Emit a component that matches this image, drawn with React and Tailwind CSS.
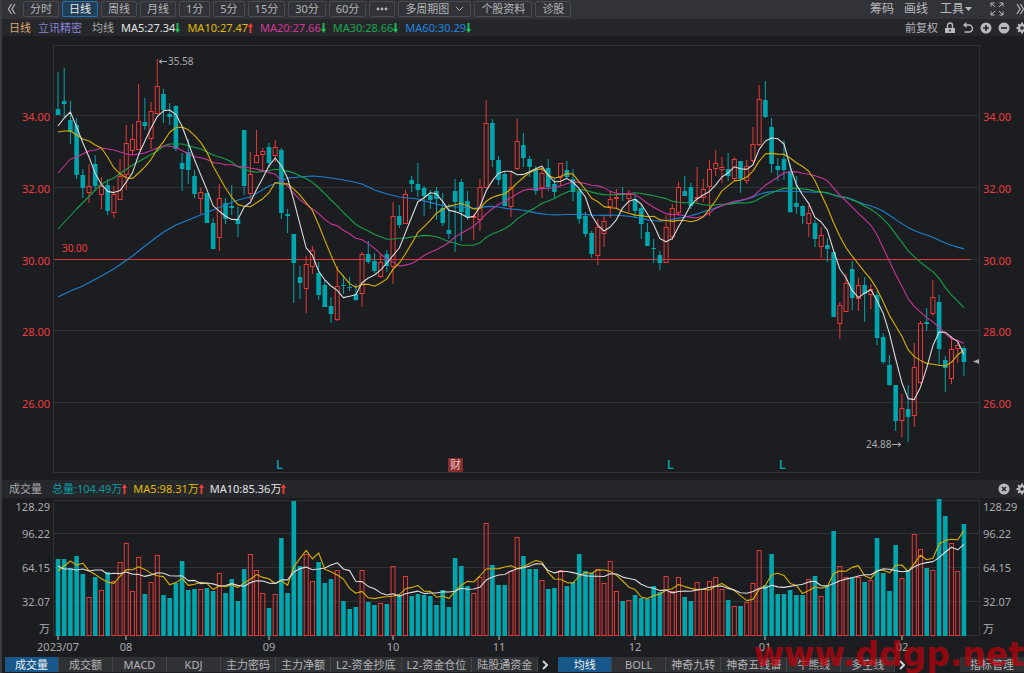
const UP = "#e63a38";
const DOWN = "#00a6ad";
const STEP = 6.205;
const FIRST_X = 58;

// [rising, high, body top, body bottom, low, volume top], in chart units
const candles = [
  [0, 72, 109, 115, 115, 559], [0, 68, 101, 104, 117, 559], [0, 101, 120, 132, 144, 568],
  [0, 118, 125, 175, 179, 556], [0, 169, 175, 188, 198, 574], [1, 164, 186, 193, 203, 597],
  [0, 155, 164, 186, 190, 577], [1, 177, 186, 195, 209, 590], [0, 179, 185, 211, 215, 572],
  [1, 186, 194, 213, 218, 581], [1, 159, 176, 200, 200, 562], [1, 125, 143, 175, 190, 543],
  [1, 124, 139, 151, 155, 591], [1, 84, 121, 150, 150, 557], [0, 98, 122, 126, 130, 594],
  [1, 102, 111, 139, 149, 582], [1, 59, 86, 114, 115, 555], [0, 89, 94, 110, 123, 595],
  [0, 103, 114, 117, 125, 598], [0, 105, 106, 149, 151, 583], [0, 153, 163, 169, 191, 561],
  [0, 139, 152, 170, 184, 590], [0, 170, 176, 194, 198, 589], [1, 188, 192, 199, 214, 589],
  [0, 193, 193, 223, 223, 588], [0, 218, 223, 249, 249, 591], [1, 184, 198, 238, 251, 573],
  [0, 198, 203, 219, 224, 593], [0, 185, 206, 208, 215, 579], [0, 207, 219, 224, 237, 601],
  [0, 130, 130, 186, 195, 569], [1, 152, 174, 194, 200, 554], [1, 130, 155, 163, 163, 570],
  [1, 148, 151, 155, 170, 593], [0, 143, 147, 163, 168, 608], [1, 140, 147, 156, 162, 594],
  [0, 148, 150, 213, 219, 538], [0, 209, 214, 216, 233, 593], [0, 234, 234, 263, 303, 501],
  [0, 266, 277, 283, 299, 566], [1, 256, 264, 289, 313, 554], [1, 246, 250, 267, 274, 581],
  [0, 262, 273, 295, 300, 562], [0, 280, 285, 307, 307, 583], [0, 297, 306, 314, 323, 579],
  [1, 266, 286, 320, 321, 570], [0, 275, 285, 286, 294, 601], [0, 277, 287, 288, 291, 609],
  [0, 284, 294, 300, 301, 607], [1, 252, 254, 294, 307, 570], [0, 241, 254, 262, 264, 602],
  [0, 253, 261, 271, 273, 605], [1, 254, 262, 277, 278, 603], [0, 250, 254, 266, 272, 604],
  [1, 202, 216, 267, 284, 566], [0, 205, 216, 225, 228, 595], [1, 190, 194, 224, 224, 576],
  [0, 176, 180, 184, 192, 596], [0, 163, 184, 190, 197, 594], [0, 186, 188, 196, 216, 595],
  [0, 190, 195, 200, 209, 596], [0, 187, 191, 199, 220, 605], [0, 193, 208, 223, 226, 590],
  [0, 204, 230, 234, 239, 607], [0, 179, 191, 202, 252, 558], [0, 179, 182, 212, 241, 566],
  [0, 191, 201, 217, 220, 586], [1, 214, 216, 218, 240, 593], [1, 179, 187, 220, 231, 577],
  [1, 100, 123, 188, 188, 523], [0, 119, 123, 160, 167, 565], [0, 156, 160, 180, 185, 585],
  [0, 172, 174, 206, 206, 585], [1, 172, 187, 207, 217, 571], [1, 119, 141, 169, 170, 537],
  [0, 133, 145, 158, 167, 556], [0, 156, 159, 167, 177, 569], [0, 166, 169, 191, 195, 569],
  [1, 167, 173, 188, 198, 580], [0, 159, 168, 187, 191, 589], [0, 179, 184, 192, 199, 588],
  [1, 163, 163, 178, 186, 570], [0, 161, 170, 177, 179, 586], [0, 169, 179, 192, 201, 582],
  [0, 189, 191, 219, 224, 554], [0, 212, 216, 234, 237, 571], [0, 231, 233, 254, 258, 573],
  [1, 219, 227, 256, 265, 569], [1, 215, 221, 234, 247, 583], [1, 191, 199, 207, 218, 561],
  [1, 189, 197, 199, 209, 591], [0, 187, 193, 195, 201, 601], [1, 190, 194, 199, 212, 600],
  [0, 195, 199, 211, 218, 595], [0, 205, 208, 224, 239, 598], [0, 223, 232, 246, 246, 599],
  [0, 239, 248, 249, 263, 586], [0, 251, 255, 263, 270, 592], [1, 215, 227, 263, 263, 576],
  [1, 204, 208, 237, 240, 591], [1, 182, 187, 213, 216, 577], [0, 176, 191, 196, 196, 597],
  [0, 183, 187, 206, 209, 601], [1, 167, 197, 199, 203, 582], [1, 179, 189, 198, 202, 589],
  [1, 160, 169, 187, 216, 581], [1, 150, 163, 169, 176, 577], [1, 157, 167, 170, 183, 589],
  [0, 153, 169, 176, 181, 600], [1, 157, 159, 179, 181, 606], [0, 161, 161, 179, 193, 606],
  [1, 160, 166, 181, 184, 602], [1, 127, 144, 161, 163, 583], [1, 85, 99, 145, 146, 550],
  [0, 81, 100, 117, 118, 585], [0, 118, 127, 164, 173, 554], [0, 158, 166, 170, 181, 594],
  [0, 140, 159, 170, 180, 594], [0, 164, 171, 212, 213, 590], [0, 176, 203, 207, 214, 595],
  [0, 205, 206, 216, 224, 595], [1, 205, 213, 224, 237, 579], [0, 220, 223, 239, 247, 576],
  [1, 227, 235, 247, 258, 596], [0, 238, 245, 249, 262, 586], [0, 252, 252, 317, 317, 531],
  [1, 302, 305, 324, 339, 566], [1, 274, 283, 312, 312, 577], [0, 261, 269, 298, 310, 577],
  [1, 278, 285, 299, 311, 577], [0, 277, 285, 294, 322, 582], [1, 284, 289, 295, 309, 580],
  [0, 291, 295, 338, 345, 538], [0, 333, 337, 362, 364, 573], [0, 355, 365, 385, 386, 591],
  [0, 385, 385, 421, 431, 545], [1, 394, 408, 421, 437, 578], [0, 385, 409, 417, 442, 570],
  [1, 343, 367, 416, 427, 534], [1, 321, 323, 383, 384, 549], [0, 308, 322, 324, 331, 568],
  [1, 280, 297, 314, 316, 570], [0, 295, 302, 349, 366, 499], [0, 356, 360, 368, 392, 516],
  [1, 336, 349, 379, 384, 543], [1, 343, 345, 349, 363, 571], [0, 346, 348, 362, 376, 524],
];

const closes = candles.map(([up, , top, bottom]) => (up ? top : bottom));
const volumes = candles.map((c) => c[5]);

const xAt = (i) => FIRST_X + i * STEP;

// head: [index, y] pairs for the days before the window is full
function averageLine(values, size, head) {
  const points = head.map(([i, y]) => `${xAt(i).toFixed(1)},${y}`);
  for (let i = size - 1; i < values.length; i++) {
    let sum = 0;
    for (let j = i - size + 1; j <= i; j++) sum += values[j];
    points.push(`${xAt(i).toFixed(1)},${(sum / size).toFixed(1)}`);
  }
  return points.join(" ");
}

const priceLines = [
  { color: "#1c80d0", points: averageLine(closes, 60, [[0, 297], [2, 291], [4, 286], [7, 276], [9, 269], [12, 256], [14, 246], [17, 232], [19, 225], [21, 220], [23, 215], [25, 210], [27, 205], [29, 200], [31, 197], [34, 186], [36, 181], [37, 178], [39, 177], [41, 176], [43, 177], [45, 179], [47, 181], [49, 184], [51, 190], [53, 194], [55, 197], [58, 199]]) },
  { color: "#18a04a", points: averageLine(closes, 30, [[0, 229], [3, 209], [7, 184], [9, 178], [12, 165], [14, 158], [16, 151], [17, 146], [18, 144], [20, 144], [23, 149], [25, 155], [27, 159], [28, 162]]) },
  { color: "#c9349a", points: averageLine(closes, 20, [[0, 173], [1, 166], [2, 159], [3, 157], [5, 151], [6, 150], [7, 148], [9, 150], [11, 154], [12, 155], [14, 153], [16, 148], [17, 146], [18, 146]]) },
  { color: "#d6b000", points: averageLine(closes, 10, [[0, 132], [1, 131], [2, 131], [3, 135], [4, 139], [5, 141], [6, 145], [7, 148], [8, 157]]) },
  { color: "#dcdcdc", points: averageLine(closes, 5, [[0, 126], [1, 118], [2, 112], [3, 127]]) },
];

const volumeLines = [
  { color: "#d6b000", points: averageLine(volumes, 5, [[0, 571], [1, 566], [2, 561], [3, 565]]) },
  { color: "#dcdcdc", points: averageLine(volumes, 10, [[0, 566], [1, 569], [2, 569], [3, 570], [4, 569], [5, 571], [6, 570], [7, 570], [8, 574]]) },
];

const periods = ["分时", "日线", "周线", "月线", "1分", "5分", "15分", "30分", "60分"];

const averages = [
  { text: "MA5:27.34", color: "text-[#e4e4e4]", up: false },
  { text: "MA10:27.47", color: "text-[#e0bb00]", up: true },
  { text: "MA20:27.66", color: "text-[#d6379b]", up: false },
  { text: "MA30:28.66", color: "text-[#1ba650]", up: false },
  { text: "MA60:30.29", color: "text-[#1f86e0]", up: false },
];

const volumeStats = [
  { text: "总量:104.49万", color: "text-[#0b9ba3]", up: true },
  { text: "MA5:98.31万", color: "text-[#e0bb00]", up: true },
  { text: "MA10:85.36万", color: "text-[#e4e4e4]", up: true },
];

const volumeTabs = ["成交量", "成交额", "MACD", "KDJ", "主力密码", "主力净额", "L2-资金抄底", "L2-资金仓位", "陆股通资金"];
const priceTabs = ["均线", "BOLL", "神奇九转", "神奇五线谱", "牛熊线", "多空线"];

const priceAxis = [["34.00", 116], ["32.00", 188], ["30.00", 260], ["28.00", 331], ["26.00", 403]];
const volumeAxis = [["128.29", 507], ["96.22", 534], ["64.15", 568], ["32.07", 602], ["万", 629]];
const months = [["2023/07", 0], ["08", 11], ["09", 34], ["10", 54], ["11", 71], ["12", 93], ["01", 114], ["02", 136]];

function Arrow({ up }) {
  return (
    <svg viewBox="0 0 5 10" className="h-[10px] w-[5px] shrink-0" aria-hidden="true">
      {up ? (
        <path d="M2.5 0 5 4H3.4V10H1.6V4H0z" fill="#ff3b36" />
      ) : (
        <path d="M2.5 10 5 6H3.4V0H1.6V6H0z" fill="#1cc558" />
      )}
    </svg>
  );
}

function Stat({ item }) {
  return (
    <span className={`flex items-center ${item.color}`}>
      {item.text}
      <Arrow up={item.up} />
    </span>
  );
}

function IconButton({ label, children }) {
  return (
    <button type="button" aria-label={label} className="shrink-0 text-[#b9babc]">
      <svg viewBox="0 0 12 12" className="size-3" fill="currentColor">
        {children}
      </svg>
    </button>
  );
}

function Gear() {
  return (
    <IconButton label="设置">
      <g stroke="currentColor" strokeWidth="2">
        <path d="M6 .5v11M.5 6h11M2.1 2.1l7.8 7.8M9.9 2.1 2.1 9.9" />
      </g>
      <circle cx="6" cy="6" r="4" />
      <circle cx="6" cy="6" r="1.8" fill="#26272b" />
    </IconButton>
  );
}

function ToolButton({ active, label, children }) {
  return (
    <button
      type="button"
      aria-label={label}
      className={`flex h-4 shrink-0 items-center gap-0.5 rounded-xs border px-1.5 ${
        active ? "border-[#2176b5] bg-[#213f56] text-[#e8eaec]" : "border-[#4a4b4f] text-[#b4b5b7]"
      }`}
    >
      {children}
    </button>
  );
}

function Toolbar() {
  return (
    <div className="flex h-[19px] items-start justify-between bg-[#323338] pt-px pl-[5px]">
      <div className="flex gap-[3px]">
        <button type="button" aria-label="收起" className="mr-1 h-4 text-[#b9babc]">
          <svg viewBox="0 0 9 12" className="h-3 w-[9px]" fill="none" stroke="currentColor" strokeWidth="1.2">
            <path d="M4.5 1 1.5 6l3 5M8 1 5 6l3 5" />
          </svg>
        </button>
        {periods.map((p) => (
          <ToolButton key={p} active={p === "日线"}>{p}</ToolButton>
        ))}
        <ToolButton label="更多周期">
          <svg viewBox="0 0 12 4" className="h-1 w-3" fill="currentColor">
            <circle cx="2" cy="2" r="1.4" />
            <circle cx="6" cy="2" r="1.4" />
            <circle cx="10" cy="2" r="1.4" />
          </svg>
        </ToolButton>
        <ToolButton>
          多周期图
          <svg viewBox="0 0 9 6" className="ml-1 h-1.5 w-[9px]" fill="none" stroke="currentColor">
            <path d="M1 1l3.5 3.5L8 1" />
          </svg>
        </ToolButton>
        <ToolButton>个股资料</ToolButton>
        <ToolButton>诊股</ToolButton>
      </div>
      <div className="flex h-4 items-center text-xs text-[#b9babc]">
        <button type="button" className="mr-2.5">筹码</button>
        <button type="button" className="mr-3">画线</button>
        <button type="button" className="mr-[18px] flex items-center gap-px">
          工具
          <svg viewBox="0 0 7 4" className="h-1 w-[7px]" fill="currentColor">
            <path d="M0 0h7L3.5 4z" />
          </svg>
        </button>
        <button type="button" aria-label="全屏" className="mr-3">
          <svg viewBox="0 0 14 14" className="size-3.5" fill="none" stroke="currentColor">
            <path d="M1 4.5V1h3.5M1 1l4 4M9.5 1H13v3.5M13 1 9 5M1 9.5V13h3.5M1 13l4-4M13 9.5V13H9.5M13 13 9 9" />
          </svg>
        </button>
        <button type="button" aria-label="展开">
          <svg viewBox="0 0 8 12" className="h-3 w-2" fill="none" stroke="currentColor" strokeWidth="1.2">
            <path d="M1 1l3 5-3 5M4.5 1l3 5-3 5" />
          </svg>
        </button>
      </div>
    </div>
  );
}

function Legend() {
  return (
    <div className="flex h-[17px] items-center justify-between overflow-hidden bg-[#26272b] pl-[7px]">
      <div className="flex items-center gap-[7px]">
        <span className="text-[#dfa878]">日线</span>
        <span className="mr-[3px] text-[#8683d6]">立讯精密</span>
        <span className="text-[#a6a7a9]">均线</span>
        {averages.map((a) => (
          <Stat key={a.text} item={a} />
        ))}
      </div>
      <div className="-mr-1 flex items-center gap-1.5">
        <button type="button" className="text-[#b4b5b7]">前复权</button>
        <IconButton label="锁定">
          <path d="M1 6h10v5H1z" />
          <path d="M3.5 6V3.5a2.5 2.5 0 0 1 5 0V6" fill="none" stroke="currentColor" strokeWidth="1.4" />
          <circle cx="6" cy="8.5" r="1" fill="#26272b" />
        </IconButton>
        <IconButton label="撤销">
          <path d="M1 3 4.5 0v6z" />
          <path d="M3.5 3H7a3.5 3.5 0 0 1 0 7H2.5" fill="none" stroke="currentColor" strokeWidth="1.5" />
        </IconButton>
        <IconButton label="放大">
          <circle cx="6" cy="6" r="5.5" />
          <path d="M6 3v6M3 6h6" stroke="#26272b" strokeWidth="1.7" />
        </IconButton>
        <IconButton label="缩小">
          <circle cx="6" cy="6" r="5.5" />
          <path d="M3 6h6" stroke="#26272b" strokeWidth="1.7" />
        </IconButton>
        <Gear />
      </div>
    </div>
  );
}

function EventMark({ x }) {
  return (
    <text x={x} y="469" fill={DOWN} fontSize="13" fontWeight="500">L</text>
  );
}

function PriceChart() {
  return (
    <svg viewBox="2 36 1022 444" className="block h-auto w-full" fontSize="11" role="img" aria-label="日线">
      <rect x="53.5" y="45.5" width="926" height="427" fill="none" stroke="#303135" />
      {priceAxis.map(([label, y]) => (
        <g key={label} fill="#ee3c3a">
          <path d={`M54 ${y - 0.5}H979`} stroke="#303135" />
          <text x="50" y={y + 5} textAnchor="end">{label}</text>
          <text x="983" y={y + 5}>{label}</text>
        </g>
      ))}
      <path d="M54 259.5H970" stroke="#d83a38" />
      <text x="62" y="252" fill="#ee3c3a" fontSize="10">30.00</text>

      {candles.map(([up, high, top, bottom, low], i) => {
        const x = xAt(i);
        const color = up ? UP : DOWN;
        return (
          <g key={i}>
            {up ? (
              <path d={`M${x} ${high}V${top}M${x} ${bottom}V${low}`} stroke={color} />
            ) : (
              <path d={`M${x} ${high}V${low}`} stroke={color} />
            )}
            {up ? (
              <rect x={x - 2} y={top + 0.5} width="4" height={Math.max(bottom - top - 1, 1)} fill="none" stroke={color} />
            ) : (
              <rect x={x - 2.3} y={top} width="4.6" height={bottom - top} fill={color} />
            )}
          </g>
        );
      })}
      {priceLines.map((l) => (
        <polyline key={l.color} points={l.points} fill="none" stroke={l.color} strokeWidth="1.1" strokeLinejoin="round" />
      ))}

      <g fill="#a9aaac" fontSize="10">
        <path d="M167 61.5H159M162 59.5l-3 2 3 2" fill="none" stroke="#a9aaac" />
        <text x="168" y="65">35.58</text>
        <text x="866" y="448">24.88</text>
        <path d="M892 444.5H901M898 442.5l3 2-3 2" fill="none" stroke="#a9aaac" />
        <path d="M973 361.5l6-2.5v5z" />
      </g>
      <EventMark x="276" />
      <EventMark x="667" />
      <EventMark x="779" />
      <rect x="448" y="458" width="15" height="14" rx="1" fill="#8a2c2e" />
      <text x="455.5" y="469" textAnchor="middle" fill="#f0c9c9">财</text>
    </svg>
  );
}

function VolumeChart() {
  return (
    <svg viewBox="2 498 1022 158" className="block h-auto w-full" fontSize="11" role="img" aria-label="成交量">
      <path d="M53.5 636V500.5H979.5V636M54 533.5H979M54 567.5H979M54 601.5H979M54 635.5H979" fill="none" stroke="#303135" />
      {volumeAxis.map(([label, y]) => (
        <g key={label} fill="#a9aaac">
          <text x="50" y={y + 4} textAnchor="end">{label}</text>
          <text x="983" y={y + 4}>{label}</text>
        </g>
      ))}
      {candles.map(([up, , , , , top], i) => {
        const x = xAt(i);
        return up ? (
          <rect key={i} x={x - 2} y={top + 0.5} width="4" height={635 - top} fill="none" stroke={UP} />
        ) : (
          <rect key={i} x={x - 2.3} y={top} width="4.6" height={636 - top} fill={DOWN} />
        );
      })}
      {volumeLines.map((l) => (
        <polyline key={l.color} points={l.points} fill="none" stroke={l.color} strokeWidth="1.1" strokeLinejoin="round" />
      ))}
      {months.map(([label, i]) => (
        <g key={label} fill="#a9aaac">
          <path d={`M${Math.round(xAt(i))} 636v4`} stroke="#c4c5c7" />
          <text x={Math.round(xAt(i))} y="651" textAnchor="middle">{label}</text>
        </g>
      ))}
    </svg>
  );
}

function Tabs({ items, active }) {
  return (
    <div className="flex">
      {items.map((t) => (
        <button
          key={t}
          type="button"
          className={`h-[15px] min-w-[54px] shrink-0 border-r border-[#45464a] px-[5px] text-center leading-[15px] ${
            t === active ? "bg-[#17578a] text-[#f0f1f2]" : "bg-[#303135] text-[#b4b5b7]"
          }`}
        >
          {t}
        </button>
      ))}
      <button type="button" aria-label="更多指标" className="w-5 text-[#d0d1d3]">
        <svg viewBox="0 0 6 10" className="ml-1 h-2.5 w-1.5" fill="none" stroke="currentColor" strokeWidth="2">
          <path d="M1 1l4 4-4 4" />
        </svg>
      </button>
    </div>
  );
}

export default function App() {
  return (
    <div className="relative min-h-screen overflow-hidden border-l-2 border-[#3b3c40] bg-[#1c1d21] font-['Noto_Sans','Noto_Sans_CJK_SC',sans-serif] text-[11px] leading-4 whitespace-nowrap">
      <Toolbar />
      <Legend />
      <PriceChart />
      <div className="flex h-[18px] items-center justify-between overflow-hidden bg-[#26272b] pl-[7px]">
        <div className="flex items-center gap-1.5">
          <span className="mr-1 text-[#a6a7a9]">成交量</span>
          {volumeStats.map((s) => (
            <Stat key={s.text} item={s} />
          ))}
        </div>
        <div className="-mr-1 flex items-center gap-1.5">
          <IconButton label="关闭">
            <circle cx="6" cy="6" r="5.5" />
            <path d="M4 4l4 4M8 4 4 8" stroke="#26272b" strokeWidth="1.6" />
          </IconButton>
          <Gear />
        </div>
      </div>
      <VolumeChart />
      <div className="relative flex h-[17px] items-start pt-px pl-[3px]">
        <Tabs items={volumeTabs} active="成交量" />
        <Tabs items={priceTabs} active="均线" />
        <button type="button" className="ml-auto h-[15px] w-16 bg-[#303135] text-center leading-[15px] text-[#b4b5b7]">
          指标管理
        </button>
        <span className="pointer-events-none absolute right-0 bottom-0.5 font-['DejaVu_Sans',sans-serif] text-[33px] leading-none font-bold text-[#c40008]/70">
          www.ddgp.net
        </span>
      </div>
    </div>
  );
}
